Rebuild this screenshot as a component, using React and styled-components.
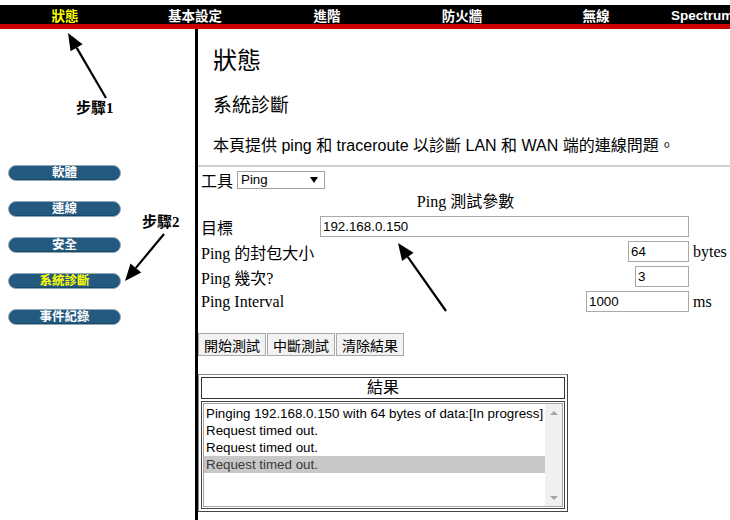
import React from "react";
import styled, { createGlobalStyle } from "styled-components";

const GlobalStyle = createGlobalStyle`
  html, body {
    margin: 0;
    padding: 0;
    background: #fff;
  }
  body {
    font-family: "Liberation Serif", "Noto Sans CJK TC", serif;
    color: #000;
  }
`;

const CJK = `"Liberation Sans", "Noto Sans CJK TC", sans-serif`;
const SERIF = `"Liberation Serif", "Noto Sans CJK TC", serif`;

const Page = styled.div`
  position: relative;
  width: 730px;
  height: 520px;
  overflow: hidden;
  padding-top: 5px;
  box-sizing: border-box;
`;

const TopBar = styled.div`
  display: grid;
  grid-template-columns: 130px 130px 134px 136px 132px 1fr;
  height: 19px;
  background: #000;
  border-bottom: 5px solid #cc0000;
`;

const NavItem = styled.div`
  display: flex;
  align-items: center;
  justify-content: ${(p) => (p.$left ? "flex-start" : "center")};
  padding-left: ${(p) => (p.$left ? "9px" : "0")};
  font-family: ${CJK};
  font-size: 13.5px;
  font-weight: bold;
  white-space: nowrap;
  color: ${(p) => (p.$active ? "#ffff00" : "#fff")};
`;

const Body = styled.div`
  display: flex;
  height: 491px;
`;

const Side = styled.div`
  width: 198px;
  flex-shrink: 0;
  border-right: 3px solid #000;
  padding: 136px 0 0 8px;
  box-sizing: border-box;
  display: flex;
  flex-direction: column;
  gap: 20px;
`;

const Pill = styled.div`
  width: 113px;
  height: 16px;
  box-sizing: border-box;
  border-radius: 8px;
  background: #255a80;
  border: 1px solid #8fa9b8;
  box-shadow: inset 0 -1px 0 #1c4868;
  display: flex;
  align-items: center;
  justify-content: center;
  font-family: ${CJK};
  font-size: 12.5px;
  font-weight: bold;
  line-height: 1;
  color: ${(p) => (p.$active ? "#ffff00" : "#fff")};
`;

const Main = styled.div`
  flex: 1;
  display: flex;
  flex-direction: column;
`;

const Intro = styled.div`
  padding-left: 15px;
`;

const Title = styled.h1`
  margin: 17px 0 0;
  font-family: ${SERIF};
  font-weight: normal;
  font-size: 24px;
  line-height: 30px;
`;

const SubTitle = styled.h2`
  margin: 18px 0 0;
  font-family: ${SERIF};
  font-weight: normal;
  font-size: 19px;
  line-height: 24px;
`;

const Desc = styled.p`
  margin: 18px 0 0;
  font-family: ${CJK};
  font-size: 16px;
  line-height: 20px;
`;

const Divider = styled.div`
  height: 2px;
  background: #d0d0d0;
  margin-top: 9px;
`;

const Form = styled.div`
  padding-left: 3px;
`;

const ToolRow = styled.div`
  display: flex;
  align-items: center;
  gap: 4px;
  height: 20px;
  margin-top: 3px;
  font-family: ${CJK};
  font-size: 16px;
`;

const Select = styled.div`
  position: relative;
  width: 88px;
  height: 18px;
  box-sizing: border-box;
  border: 1px solid #a0a0a0;
  font-family: "Liberation Sans", sans-serif;
  font-size: 13.33px;
  line-height: 16px;
  padding-left: 3px;
  &::after {
    content: "";
    position: absolute;
    right: 6px;
    top: 5px;
    border-left: 4px solid transparent;
    border-right: 4px solid transparent;
    border-top: 6px solid #000;
  }
`;

const ParamTitle = styled.div`
  margin-top: 2px;
  text-align: center;
  font-family: ${SERIF};
  font-size: 16px;
  line-height: 20px;
`;

const ParamGrid = styled.div`
  display: grid;
  grid-template-columns: 115px 369px auto;
  grid-auto-rows: 25px;
  column-gap: 4px;
  margin-top: 2px;
  align-items: center;
`;

const Label = styled.div`
  font-family: ${(p) => (p.$sans ? CJK : SERIF)};
  font-size: 16px;
  white-space: nowrap;
`;

const InputCell = styled.div`
  display: flex;
  justify-content: flex-end;
`;

const Input = styled.input`
  width: ${(p) => p.$w}px;
  height: 21px;
  box-sizing: border-box;
  border: 1px solid #a9a9a9;
  padding: 0 2px;
  margin: 0;
  font-family: "Liberation Sans", sans-serif;
  font-size: 13.33px;
  color: #000;
  outline: none;
`;

const Unit = styled.div`
  font-family: ${SERIF};
  font-size: 16px;
`;

const ButtonRow = styled.div`
  display: flex;
  gap: 1px;
  margin: 19px 0 0 -3px;
`;

const Button = styled.button`
  height: 23px;
  padding: 0 5px;
  box-sizing: border-box;
  border: 1px solid #a8a8a8;
  background: #f2f2f2;
  font-family: ${CJK};
  font-size: 14px;
  color: #000;
  margin: 0;
`;

const ResultTable = styled.div`
  width: 370px;
  height: 138px;
  box-sizing: border-box;
  margin: 18px 0 0 -3px;
  border: 1px solid #8a8a8a;
  border-right-color: #444;
  border-bottom-color: #444;
  padding: 2px;
  display: flex;
  flex-direction: column;
  gap: 2px;
`;

const ResultHead = styled.div`
  height: 22px;
  box-sizing: border-box;
  border: 1px solid #333;
  text-align: center;
  font-family: ${CJK};
  font-size: 16px;
  line-height: 20px;
`;

const ListOuter = styled.div`
  flex: 1;
  border: 1px solid #444;
  padding: 1px;
  display: flex;
`;

const ListInner = styled.div`
  flex: 1;
  border: 1px solid #a5a5a5;
  display: flex;
`;

const Lines = styled.div`
  flex: 1;
  padding-top: 1px;
`;

const Line = styled.div`
  height: 17px;
  line-height: 17px;
  padding-left: 2px;
  font-family: "Liberation Sans", sans-serif;
  font-size: 13.33px;
  white-space: nowrap;
  background: ${(p) => (p.$selected ? "#c8c8c8" : "transparent")};
  color: ${(p) => (p.$selected ? "#3a3a3a" : "#000")};
`;

const ScrollTrack = styled.div`
  width: 17px;
  background: #f0f0f0;
  display: flex;
  flex-direction: column;
  justify-content: space-between;
  align-items: center;
  padding: 7px 0 6px;
  box-sizing: border-box;
`;

const ScrollArrow = styled.div`
  width: 0;
  height: 0;
  border-left: 4px solid transparent;
  border-right: 4px solid transparent;
  ${(p) =>
    p.$up
      ? "border-bottom: 4px solid #a3a3a3;"
      : "border-top: 4px solid #a3a3a3;"}
`;

const Overlay = styled.svg`
  position: absolute;
  left: 0;
  top: 0;
  pointer-events: none;
`;

const StepLabel = styled.div`
  position: absolute;
  left: ${(p) => p.$x}px;
  top: ${(p) => p.$y}px;
  font-family: ${SERIF};
  font-size: 15px;
  font-weight: bold;
  line-height: 18px;
  white-space: nowrap;
`;

function Arrow({ x1, y1, x2, y2 }) {
  const ang = Math.atan2(y2 - y1, x2 - x1);
  const len = 17;
  const half = 7;
  const bx = x2 - len * Math.cos(ang);
  const by = y2 - len * Math.sin(ang);
  const px = -Math.sin(ang) * half;
  const py = Math.cos(ang) * half;
  return (
    <g>
      <line x1={x1} y1={y1} x2={bx} y2={by} stroke="#000" strokeWidth="2.2" />
      <polygon
        points={`${x2},${y2} ${bx + px},${by + py} ${bx - px},${by - py}`}
        fill="#000"
      />
    </g>
  );
}

const nav = ["狀態", "基本設定", "進階", "防火牆", "無線", "Spectrum"];
const side = ["軟體", "連線", "安全", "系統診斷", "事件紀錄"];
const lines = [
  "Pinging 192.168.0.150 with 64 bytes of data:[In progress]",
  "Request timed out.",
  "Request timed out.",
  "Request timed out.",
];

export default function App() {
  return (
    <>
      <GlobalStyle />
      <Page>
        <TopBar>
          {nav.map((n, i) => (
            <NavItem key={n} $active={i === 0} $left={i === 5}>
              {n}
            </NavItem>
          ))}
        </TopBar>
        <Body>
          <Side>
            {side.map((s, i) => (
              <Pill key={s} $active={i === 3}>
                {s}
              </Pill>
            ))}
          </Side>
          <Main>
            <Intro>
              <Title>狀態</Title>
              <SubTitle>系統診斷</SubTitle>
              <Desc>本頁提供 ping 和 traceroute 以診斷 LAN 和 WAN 端的連線問題。</Desc>
            </Intro>
            <Divider />
            <Form>
              <ToolRow>
                工具
                <Select>Ping</Select>
              </ToolRow>
              <ParamTitle>Ping 測試參數</ParamTitle>
              <ParamGrid>
                <Label $sans>目標</Label>
                <InputCell>
                  <Input $w={369} defaultValue="192.168.0.150" />
                </InputCell>
                <Unit />
                <Label>Ping 的封包大小</Label>
                <InputCell>
                  <Input $w={61} defaultValue="64" />
                </InputCell>
                <Unit>bytes</Unit>
                <Label>Ping 幾次?</Label>
                <InputCell>
                  <Input $w={54} defaultValue="3" />
                </InputCell>
                <Unit />
                <Label>Ping Interval</Label>
                <InputCell>
                  <Input $w={103} defaultValue="1000" />
                </InputCell>
                <Unit>ms</Unit>
              </ParamGrid>
              <ButtonRow>
                <Button>開始測試</Button>
                <Button>中斷測試</Button>
                <Button>清除結果</Button>
              </ButtonRow>
              <ResultTable>
                <ResultHead>結果</ResultHead>
                <ListOuter>
                  <ListInner>
                    <Lines>
                      {lines.map((l, i) => (
                        <Line key={i} $selected={i === 3}>
                          {l}
                        </Line>
                      ))}
                    </Lines>
                    <ScrollTrack>
                      <ScrollArrow $up />
                      <ScrollArrow />
                    </ScrollTrack>
                  </ListInner>
                </ListOuter>
              </ResultTable>
            </Form>
          </Main>
        </Body>
        <Overlay width="730" height="520" viewBox="0 0 730 520">
          <Arrow x1={106} y1={98} x2={68} y2={33} />
          <Arrow x1={164} y1={234} x2={125} y2={281} />
          <Arrow x1={446} y1={311} x2={398} y2={243} />
        </Overlay>
        <StepLabel $x={76} $y={99}>步驟1</StepLabel>
        <StepLabel $x={142} $y={213}>步驟2</StepLabel>
      </Page>
    </>
  );
}
